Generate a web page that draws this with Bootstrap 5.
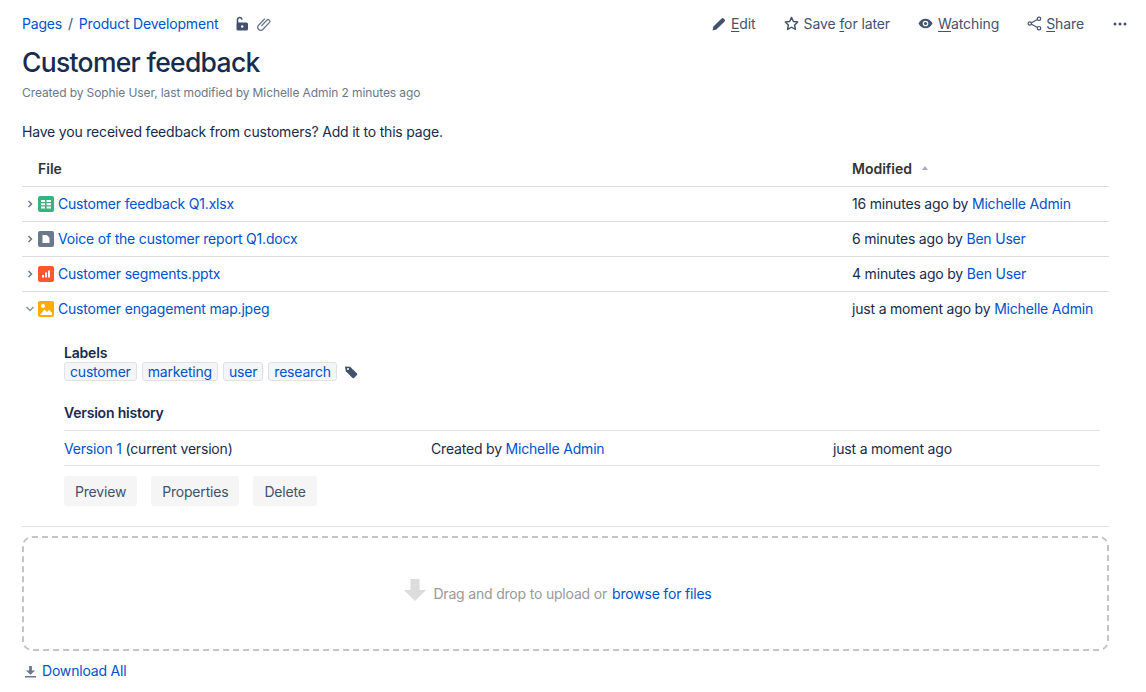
<!DOCTYPE html>
<html lang="en">
<head>
<meta charset="utf-8">
<title>Customer feedback</title>
<link href="https://cdn.jsdelivr.net/npm/bootstrap@5.3.0/dist/css/bootstrap.min.css" rel="stylesheet">
<style>
html,body{height:692px;overflow:hidden}
body{font-family:Inter,"Liberation Sans",sans-serif;font-size:14px;color:#172b4d;background:#fff;letter-spacing:-.19px}
a{color:#0052cc;text-decoration:none}
.pg{padding:0 37px 0 22px}
.topbar{height:47px}
.crumb{font-size:14px;color:#42526e}
.crumb a{color:#0052cc}
.crumb-sep{margin:0 6px;color:#42526e}
.lock-ico{margin-left:17px}
.clip-ico{margin-left:8px}
.act{color:#42526e;font-size:14px;display:flex;align-items:center;gap:5px;letter-spacing:-.1px}
.act+.act{margin-left:28px}
.act-share{gap:4px}
.act+.act-more{margin-left:29px}
.act u{text-underline-offset:2px;text-decoration-thickness:1px}
.actions{margin-right:-18px}
.page-title{font-size:26.5px;font-weight:500;line-height:30px;margin:0;color:#172b4d;letter-spacing:-.7px}
.byline{font-size:12px;color:#6b778c;margin-top:8px;line-height:16px;letter-spacing:-.1px}
.intro{margin:19px 0 9px;line-height:24px;color:#172b4d}
.files{width:100%;border-collapse:collapse}
.files th{font-weight:600;color:#333;height:33px;border-bottom:1px solid #ddd;padding:0 0 1px;vertical-align:middle;letter-spacing:0}
.files td{height:35px;border-bottom:1px solid #ddd;padding:0;vertical-align:middle;color:#172b4d}
.files tr.open td{border-bottom:0}
.files tr.detail td{height:auto;border-bottom:1px solid #dfe1e6;vertical-align:top}
.c-name{padding-left:16px!important}
.c-mod{width:257px}
.name-wrap{display:flex;align-items:center}
.tog{width:16px;margin-left:-16px;display:flex;justify-content:center}
.ficon{margin-right:4px;display:block}
.sort-up{display:inline-block;margin-left:6px;vertical-align:4px;border:3.5px solid transparent;border-bottom:4px solid #a5adba;border-top:0}
.detail-in{padding:18px 9px 19px 42px;height:200px}
.sub-h{font-weight:600;line-height:18px;color:#172b4d;font-size:14px}
.tags{display:flex;gap:5px;align-items:flex-start;height:20px}
.tagx{background:#f4f5f7;border:1px solid #dfe1e6;border-radius:3px;padding:0 5px;line-height:17px;height:19px;color:#0052cc;font-size:14px}
.tag-ico{margin:3px 0 0 2px}
.ver-h{margin-top:22px;margin-bottom:8px}
.vers{border-top:1px solid #dfe1e6;border-bottom:1px solid #dfe1e6;height:36px}
.v1{width:367px}.v2{width:402px}
.fbtn{background:#f5f5f5;border:0;border-radius:3px;color:#42526e;font-size:14px;height:30px;padding:0 11px;letter-spacing:-.19px}
.fbtn:hover{background:#ebecf0;color:#42526e}
.btns{margin-top:10px;gap:14px}
.drop{margin-top:9px;height:115px;border:2px dashed #c4c4c4;border-radius:10px;color:#999;font-size:14px;gap:7px;padding-right:15px}
.drop-ico{margin-top:-7px}
.drop-link{margin-left:-2px}
.dl{margin-top:11px;gap:6px;line-height:18px;padding-left:3px}
</style>
</head>
<body>
<div class="pg">
  <div class="topbar d-flex align-items-center justify-content-between">
    <div class="crumb d-flex align-items-center">
      <a href="#">Pages</a><span class="crumb-sep">/</span><a href="#">Product Development</a>
      <svg class="lock-ico" width="14" height="15" viewBox="0 0 14 15"><path d="M2.500 7V3.600a2.200 2.200 0 0 1 4.300-.6" fill="none" stroke="#42526e" stroke-width="1.600" stroke-linecap="round"/><rect x="1.500" y="6.500" width="11.500" height="8" rx="1.600" fill="#42526e"/><circle cx="7.200" cy="10.500" r="1.200" fill="#fff"/></svg>
      <svg class="clip-ico" width="14" height="14" viewBox="0 0 14 14"><path d="M4.700 8.300 9.800 2.900a1.700 1.700 0 0 1 2.500 2.400L6 12a3 3 0 0 1-4.400-4.100L7.500 1.700" transform="translate(0 .3)" fill="none" stroke="#6b778c" stroke-width="1.300" stroke-linecap="round"/></svg>
    </div>
    <div class="actions d-flex align-items-center">
      <a class="act" href="#"><svg width="14" height="14" viewBox="0 0 14 14"><path d="M.5 13.500 1.400 9.600 9.600 1.400a1.400 1.400 0 0 1 2 0l1 1a1.400 1.400 0 0 1 0 2l-8.200 8.200Z" fill="#42526e"/></svg><span><u>E</u>dit</span></a>
      <a class="act" href="#"><svg width="15" height="15" viewBox="0 0 16 16"><path d="m8 1.500 2 4.300 4.700.6-3.400 3.200.9 4.700L8 12l-4.200 2.300.9-4.700L1.300 6.400 6 5.800Z" fill="none" stroke="#42526e" stroke-width="1.500" stroke-linejoin="round"/></svg><span>Save <u>f</u>or later</span></a>
      <a class="act" href="#"><svg width="15" height="15" viewBox="0 0 16 16"><path d="M.5 8C2.200 4.700 4.800 3 8 3s5.800 1.700 7.500 5c-1.700 3.300-4.300 5-7.500 5S2.200 11.300.5 8Z" fill="#42526e"/><circle cx="8" cy="8" r="3" fill="#fff"/><circle cx="8" cy="8" r="1.700" fill="#42526e"/></svg><span><u>W</u>atching</span></a>
      <a class="act act-share" href="#"><svg width="15" height="15" viewBox="0 0 16 16"><path d="M12.500 3 3.500 8l9 5" fill="none" stroke="#42526e" stroke-width="1.200"/><g fill="#fff" stroke="#42526e" stroke-width="1.300"><circle cx="12.800" cy="3" r="1.800"/><circle cx="3" cy="8" r="1.800"/><circle cx="12.800" cy="13" r="1.800"/></g></svg><span><u>S</u>hare</span></a>
      <a class="act act-more" href="#" aria-label="More"><svg width="14" height="4" viewBox="0 0 14 4"><g fill="#42526e"><circle cx="2" cy="2" r="1.500"/><circle cx="7" cy="2" r="1.500"/><circle cx="12" cy="2" r="1.500"/></g></svg></a>
    </div>
  </div>
  <h1 class="page-title">Customer feedback</h1>
  <div class="byline">Created by Sophie User, last modified by Michelle Admin 2 minutes ago</div>
  <p class="intro">Have you received feedback from customers? Add it to this page.</p>
  <table class="files">
    <thead><tr><th class="c-name">File</th><th class="c-mod">Modified <span class="sort-up"></span></th></tr></thead>
    <tbody>
      <tr><td class="c-name"><div class="name-wrap"><span class="tog"><svg width="8" height="10" viewBox="0 0 8 10"><path d="m2.500 2 3 3-3 3" fill="none" stroke="#6b778c" stroke-width="1.500"/></svg></span><svg class="ficon" width="16" height="16" viewBox="0 0 16 16"><rect width="16" height="16" rx="2" fill="#36b37e"/><path d="M3 4h4v2H3zm5.500 0H13v2H8.500zM3 7.200h4v2H3zm5.500 0H13v2H8.500zM3 10.400h4v2H3zm5.500 0H13v2H8.500z" fill="#fff"/></svg><a href="#">Customer feedback Q1.xlsx</a></div></td><td>16 minutes ago by <a href="#">Michelle Admin</a></td></tr>
      <tr><td class="c-name"><div class="name-wrap"><span class="tog"><svg width="8" height="10" viewBox="0 0 8 10"><path d="m2.500 2 3 3-3 3" fill="none" stroke="#6b778c" stroke-width="1.500"/></svg></span><svg class="ficon" width="16" height="16" viewBox="0 0 16 16"><rect width="16" height="16" rx="2" fill="#6b778c"/><path d="M4.500 4h4.200l2.800 2.800V12h-7z" fill="#fff"/></svg><a href="#">Voice of the customer report Q1.docx</a></div></td><td>6 minutes ago by <a href="#">Ben User</a></td></tr>
      <tr><td class="c-name"><div class="name-wrap"><span class="tog"><svg width="8" height="10" viewBox="0 0 8 10"><path d="m2.500 2 3 3-3 3" fill="none" stroke="#6b778c" stroke-width="1.500"/></svg></span><svg class="ficon" width="16" height="16" viewBox="0 0 16 16"><rect width="16" height="16" rx="2" fill="#ff5630"/><path d="M4 9h2v2.500H4zm3-2.500h2v5H7zM10 4.500h2v7h-2z" fill="#fff"/></svg><a href="#">Customer segments.pptx</a></div></td><td>4 minutes ago by <a href="#">Ben User</a></td></tr>
      <tr class="open"><td class="c-name"><div class="name-wrap"><span class="tog"><svg width="10" height="8" viewBox="0 0 10 8"><path d="m1.500 2 3.500 3.500L8.500 2" fill="none" stroke="#8993a4" stroke-width="1.500"/></svg></span><svg class="ficon" width="16" height="16" viewBox="0 0 16 16"><rect width="16" height="16" rx="2" fill="#ffab00"/><circle cx="5" cy="5" r="2" fill="#fff"/><path d="M2 14 6.500 8.500l2.500 2.500 2.200-2.200L14 12v2z" fill="#fff"/></svg><a href="#">Customer engagement map.jpeg</a></div></td><td>just a moment ago by <a href="#">Michelle Admin</a></td></tr>
      <tr class="detail"><td colspan="2"><div class="detail-in">
        <div class="sub-h">Labels</div>
        <div class="tags"><a class="tagx" href="#">customer</a><a class="tagx" href="#">marketing</a><a class="tagx" href="#">user</a><a class="tagx" href="#">research</a>
          <svg class="tag-ico" width="14" height="14" viewBox="0 0 14 14"><path d="M1 1.500 6.200 1.800 13 8.600a1 1 0 0 1 0 1.400L10 13a1 1 0 0 1-1.400 0L1.800 6.200Z" fill="#42526e"/><circle cx="4" cy="4" r="1" fill="#fff"/></svg></div>
        <div class="sub-h ver-h">Version history</div>
        <div class="vers d-flex align-items-center"><div class="v1"><a href="#">Version 1</a> (current version)</div><div class="v2">Created by <a href="#">Michelle Admin</a></div><div>just a moment ago</div></div>
        <div class="btns d-flex"><button class="btn fbtn">Preview</button><button class="btn fbtn">Properties</button><button class="btn fbtn">Delete</button></div>
      </div></td></tr>
    </tbody>
  </table>
  <div class="drop d-flex align-items-center justify-content-center">
    <svg class="drop-ico" width="22" height="22" viewBox="0 0 22 22"><path d="M6.500 0h9v11H22L11 22 0 11h6.500z" fill="#dcdcdc"/></svg>
    <span>Drag and drop to upload or</span><a href="#" class="drop-link">browse for files</a>
  </div>
  <div class="dl d-flex align-items-center">
    <svg width="11" height="13" viewBox="0 0 12 14"><path d="M4.500 1h3v5H11L6 10.500 1 6h3.500zM0 12h12v1.500H0z" fill="#6b778c"/></svg>
    <a href="#">Download All</a>
  </div>
</div>
<script src="https://cdn.jsdelivr.net/npm/bootstrap@5.3.0/dist/js/bootstrap.bundle.min.js"></script>
</body>
</html>
